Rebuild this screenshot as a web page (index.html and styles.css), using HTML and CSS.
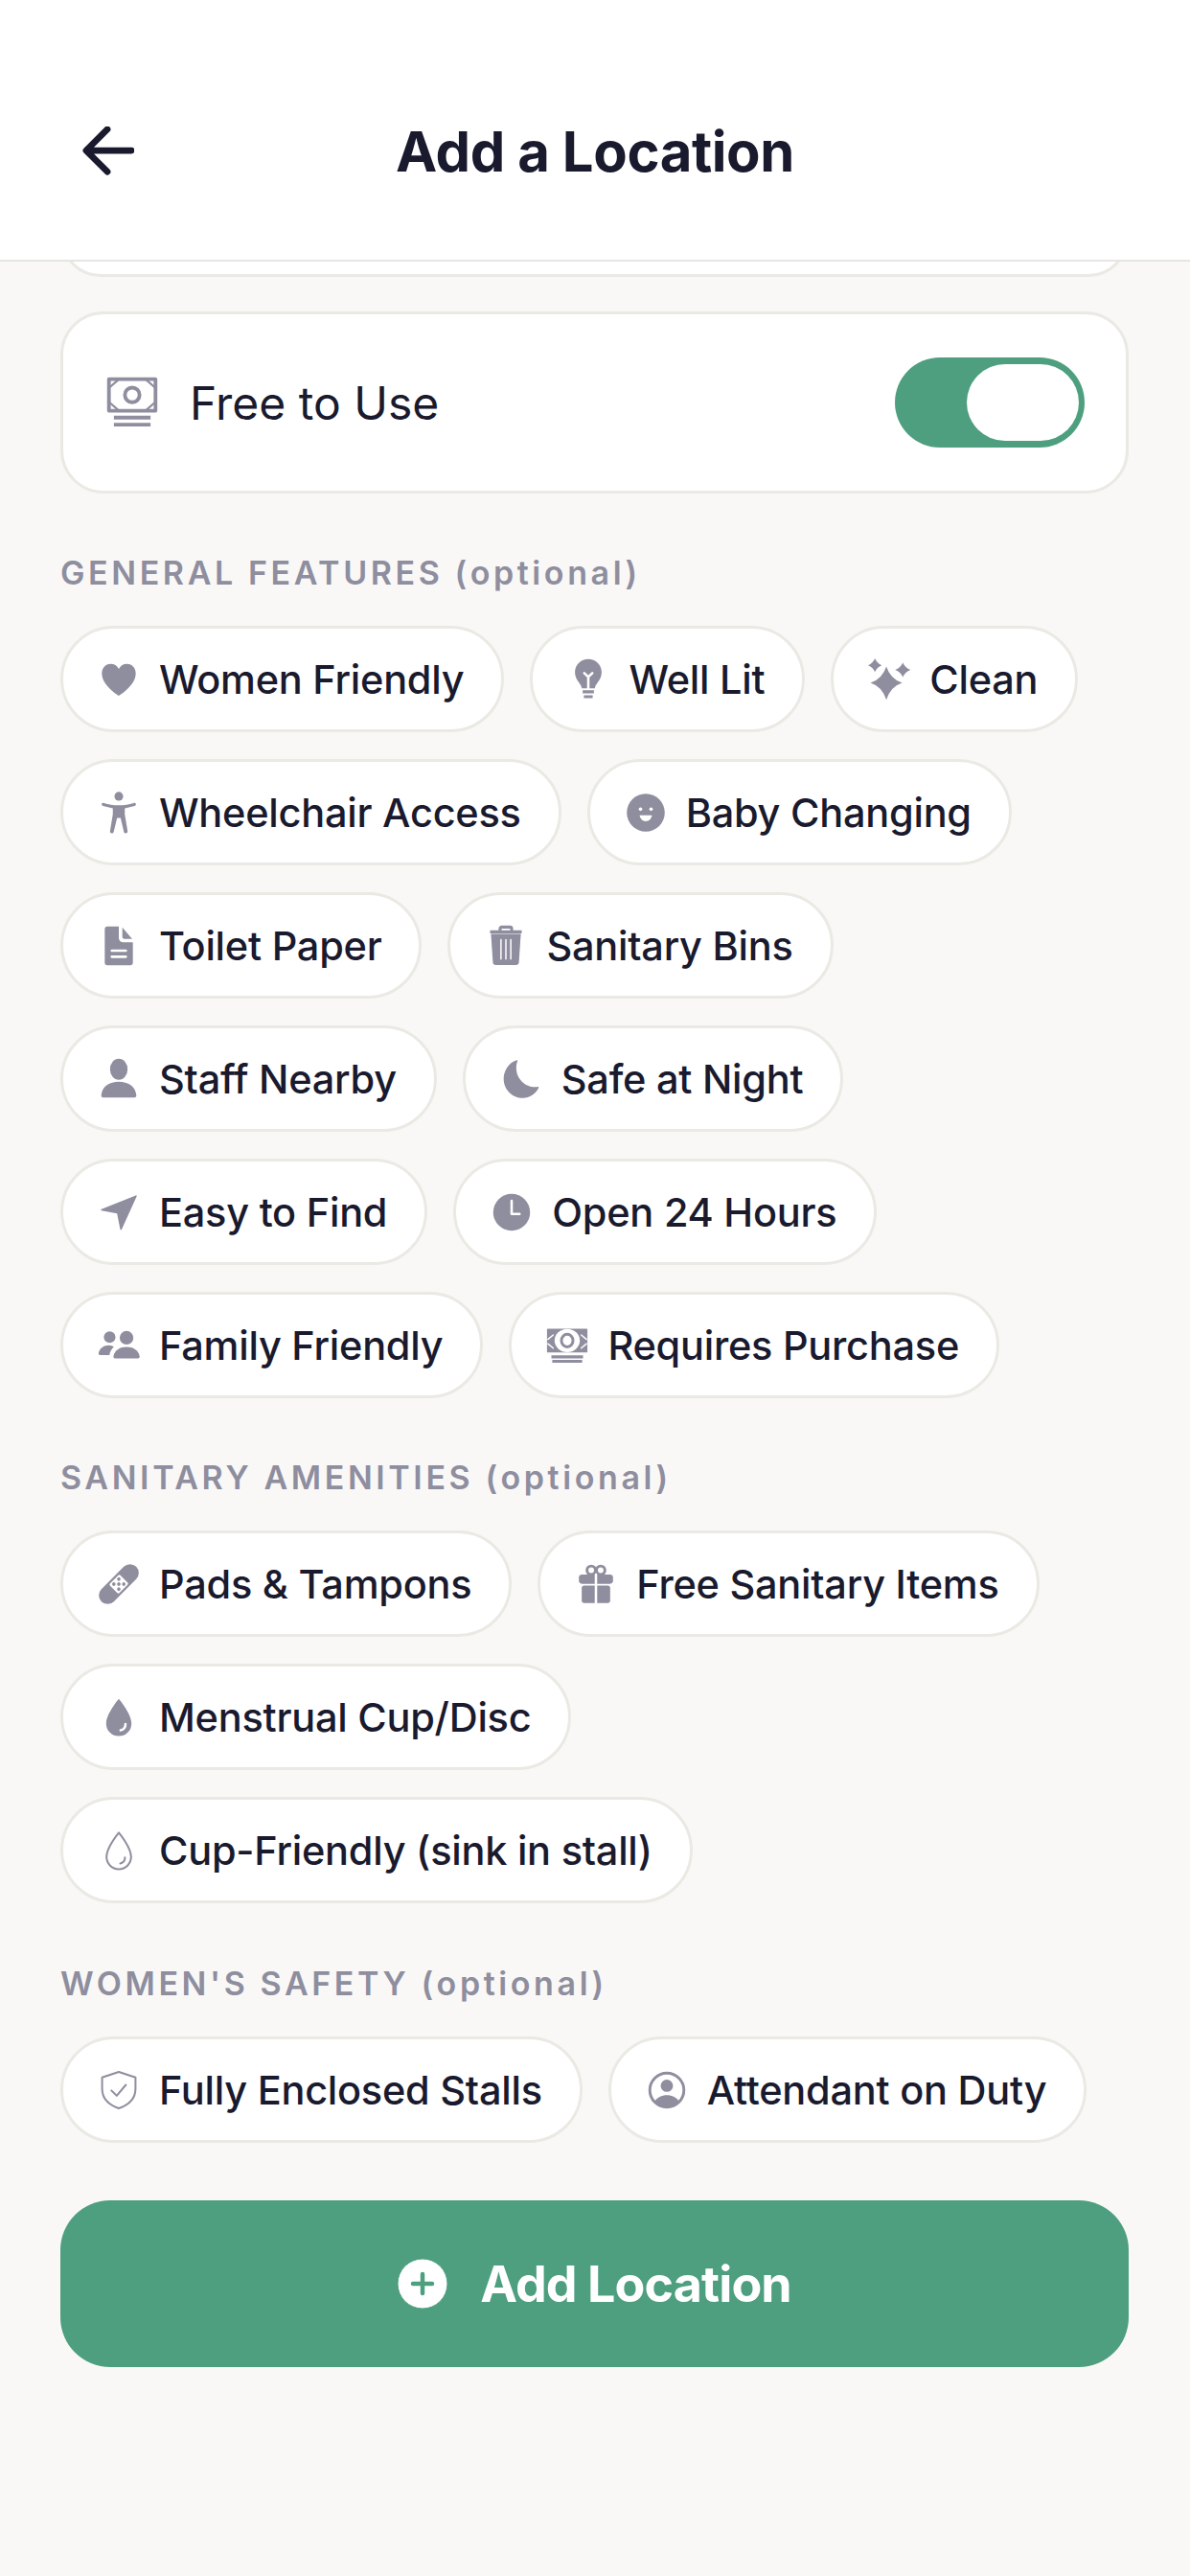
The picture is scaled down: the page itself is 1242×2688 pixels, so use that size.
FILE: index.html
```html
<!DOCTYPE html>
<html lang="en">
<head>
  <meta charset="UTF-8">
  <title>Add a Location</title>
  <link rel="stylesheet" href="styles.css">
</head>
<body>
  <header class="topbar">
    <svg class="back" viewBox="0 0 54 54"><path d="M26 3 3 26l23 23M5 26h47"/></svg>
    <h1 class="title">Add a Location</h1>
  </header>

  <main class="content">
    <div class="card card-cut"></div>

    <div class="card toggle-row">
      <svg class="icon-cash" viewBox="0 0 24 24">
        <rect x="1.2" y="1.2" width="21.6" height="14.6" class="line-thick"/>
        <circle cx="12" cy="8.5" r="3.4" class="line-thick"/>
        <path d="M1.5 5 5.5 1.5M18.5 1.5 22.5 5M1.5 12 5.5 15.5M18.5 15.5 22.5 12" class="line-thin"/>
        <path d="M3.5 19h17M3.5 22.3h17" class="line-thick"/>
      </svg>
      <span class="toggle-label">Free to Use</span>
      <div class="switch"><div class="thumb"></div></div>
    </div>

    <h2 class="section-label">GENERAL FEATURES (optional)</h2>
    <div class="chips">
      <div class="chip">
        <svg class="icon" viewBox="0 0 24 24"><path d="M12 21.2c-.4 0-9-5.600-9.600-11.800C2 5.800 4.400 3.200 7.400 3.200c2 0 3.600 1 4.600 2.800 1-1.800 2.600-2.800 4.600-2.800 3 0 5.400 2.600 5 6.200-.6 6.200-9.200 11.800-9.600 11.800z"/></svg>
        Women Friendly
      </div>
      <div class="chip">
        <svg class="icon" viewBox="0 0 24 24"><path d="M12 .4C7.800.4 4.400 3.700 4.400 7.900c0 2.600 1.200 4.400 2.400 6 .8 1 1.300 2 1.500 3.100h7.400c.2-1.100.7-2.100 1.500-3.100 1.200-1.600 2.400-3.400 2.400-6C19.600 3.700 16.200.4 12 .4z"/><path d="M9.700 8.400 12 10.600l2.300-2.200M12 10.600V17" class="cut"/><path d="M8.800 19h6.400M9.500 21.800h5" class="line-thick"/></svg>
        Well Lit
      </div>
      <div class="chip">
        <svg class="icon" viewBox="0 0 24 24"><path d="M10.400 4.600Q12.700 11.700 19.400 13.900 12.700 16.100 10.400 23.600 8.100 16.100 1.400 13.900 8.100 11.700 10.400 4.600zM3.900 0Q5 2.800 7.800 3.900 5 5 3.900 7.800 2.800 5 0 3.900 2.800 2.800 3.900 0zM19.800 2.400Q21 5.200 24.200 6.500 21 7.800 19.800 10.600 18.600 7.800 15.400 6.500 18.600 5.200 19.800 2.400z"/></svg>
        Clean
      </div>
      <div class="chip">
        <svg class="icon" viewBox="0 0 24 24"><circle cx="12" cy="2.700" r="2.500"/><path d="M2.600 6.600C2 7 2.200 8 3 8.200l5.600 1.400V13L7 22.500c-.2 1.400 1.800 1.700 2.100.4L11 15h2l1.900 7.900c.3 1.300 2.300 1 2.100-.4L15.400 13V9.600L21 8.200c.8-.2 1-1.200.4-1.600-.3-.2-.6-.2-.9-.1C18 7.200 15 7.800 12 7.800S6 7.200 3.500 6.500c-.3-.1-.6-.1-.9.1z"/></svg>
        Wheelchair Access
      </div>
      <div class="chip">
        <svg class="icon" viewBox="0 0 24 24"><circle cx="12" cy="12" r="10.800"/><circle cx="9" cy="10" r="1" class="dot"/><circle cx="15" cy="10" r="1" class="dot"/><path d="M8.500 13.500h7c-.3 2-1.700 3.400-3.500 3.400s-3.200-1.400-3.500-3.400z" class="dot"/></svg>
        Baby Changing
      </div>
      <div class="chip">
        <svg class="icon" viewBox="0 0 24 24"><path d="M5.500 1H12v6.500c0 1.400 1.100 2.500 2.500 2.500H20v11.500a1.500 1.500 0 0 1-1.500 1.500h-13A1.500 1.500 0 0 1 4 21.500v-19A1.500 1.500 0 0 1 5.500 1z"/><path d="M14 1.500 19.600 8H15a1 1 0 0 1-1-1z"/><path d="M8 14.700h8M8 18.200h8" class="cut"/></svg>
        Toilet Paper
      </div>
      <div class="chip">
        <svg class="icon" viewBox="0 0 24 24"><path d="M3.500 5.200l1.100 16.200c.1.900.7 1.500 1.600 1.500h11.600c.9 0 1.500-.6 1.600-1.500l1.100-16.200z"/><path d="M3 4h18M8.700 3.800V2.300c0-.6.400-1 1-1h4.600c.6 0 1 .4 1 1v1.500" class="line-thick"/><path d="M9.200 8.500v11M12 8.500v11M14.800 8.500v11" class="cut-thin"/></svg>
        Sanitary Bins
      </div>
      <div class="chip">
        <svg class="icon" viewBox="0 0 24 24"><ellipse cx="12" cy="6.400" rx="5" ry="6"/><path d="M12 13.500c-5.200 0-9.600 2.600-10 7.800 0 .7.400 1.200 1 1.200h18c.6 0 1-.5 1-1.200-.4-5.200-4.800-7.800-10-7.800z"/></svg>
        Staff Nearby
      </div>
      <div class="chip">
        <svg class="icon" viewBox="0 0 24 24"><path d="M9.400 1.200c.3-.1.600.2.500.5-.5 1.300-.7 2.600-.7 4 0 6 4.800 10.800 10.800 10.800.5 0 1 0 1.500-.1.400 0 .6.400.4.700C20.200 20.500 16.800 22.800 13 22.800 6.900 22.800 2 17.900 2 11.800c0-4.600 3-9.300 7.400-10.600z"/></svg>
        Safe at Night
      </div>
      <div class="chip">
        <svg class="icon" viewBox="0 0 24 24"><path d="M21.600 2.400c.4-.2.700.1.600.5l-8.600 18.900c-.2.400-.7.300-.8-.1L11 12.700 2.200 11c-.4-.1-.5-.6-.1-.8z"/></svg>
        Easy to Find
      </div>
      <div class="chip">
        <svg class="icon" viewBox="0 0 24 24"><circle cx="12" cy="12" r="10.500"/><path d="M12 5.500v7.500h4.500" class="cut"/></svg>
        Open 24 Hours
      </div>
      <div class="chip">
        <svg class="icon" viewBox="0 0 24 24"><circle cx="6.800" cy="7.200" r="3.300"/><circle cx="16.400" cy="7.600" r="3.900"/><path d="M16.400 12.800c-3.600 0-6.800 1.800-7.400 5.200-.1.700 0 1.400 1 1.400h12.800c1 0 1.100-.7 1-1.400-.6-3.400-3.800-5.200-7.400-5.200z"/><path d="M6.400 11.800c-3 .1-5.300 1.600-5.900 4.400-.1.600.1 1.200.8 1.200h5.400c.2-1.800 1.100-3.400 2.500-4.600-.8-.6-1.800-1-2.800-1z"/></svg>
        Family Friendly
      </div>
      <div class="chip">
        <svg class="icon" viewBox="0 0 24 24"><rect x="0.500" y="2.500" width="23" height="13.500" rx="0.500"/><ellipse cx="12" cy="9.200" rx="7.200" ry="6.600" class="dot"/><ellipse cx="12" cy="9.200" rx="3.300" ry="3.600" class="ring"/><path d="M1 8.500 4 6M23 8.500 20 6M1 11l3 2.500M23 11l-3 2.500" class="cut-thin"/><path d="M3 18.500h18M3.500 21h17" class="line-thick"/></svg>
        Requires Purchase
      </div>
    </div>

    <h2 class="section-label">SANITARY AMENITIES (optional)</h2>
    <div class="chips">
      <div class="chip">
        <svg class="icon" viewBox="0 0 24 24"><g transform="rotate(-45 12 12)"><rect x="-2" y="7" width="28" height="10" rx="5"/><rect x="7.800" y="8.200" width="8.400" height="7.600" rx="1" class="dot"/><circle cx="10" cy="10" r="1"/><circle cx="14" cy="10" r="1"/><circle cx="10" cy="14" r="1"/><circle cx="14" cy="14" r="1"/><circle cx="12" cy="12" r="1"/></g></svg>
        Pads &amp; Tampons
      </div>
      <div class="chip">
        <svg class="icon" viewBox="0 0 24 24"><circle cx="9.300" cy="4.100" r="2.400" class="ring"/><circle cx="14.700" cy="4.100" r="2.400" class="ring"/><rect x="2.300" y="6.500" width="19.400" height="5.300" rx="1.800"/><rect x="3.900" y="12.800" width="16.200" height="10" rx="1.500"/><path d="M12 6.500v16.500" class="cut"/></svg>
        Free Sanitary Items
      </div>
      <div class="chip">
        <svg class="icon" viewBox="0 0 24 24"><path d="M12 1.500s-7.200 8.400-7.200 14a7.200 7.200 0 0 0 14.400 0c0-5.600-7.200-14-7.200-14z"/><path d="M15.800 15.800c0 1.800-1.200 3.200-2.800 3.600" class="cut"/></svg>
        Menstrual Cup/Disc
      </div>
      <div class="chip">
        <svg class="icon" viewBox="0 0 24 24"><path d="M12 1.800s-7 8.300-7 13.800a7 7 0 0 0 14 0c0-5.500-7-13.800-7-13.800z" class="ring-thin"/><path d="M15.500 16c0 1.700-1.100 3-2.700 3.400" class="ring-thin"/></svg>
        Cup-Friendly (sink in stall)
      </div>
    </div>

    <h2 class="section-label last">WOMEN'S SAFETY (optional)</h2>
    <div class="chips">
      <div class="chip">
        <svg class="icon" viewBox="0 0 24 24"><path d="M12 1.600 2.500 4.800v6.400c0 5.400 3.800 9.200 9.500 11.200 5.700-2 9.500-5.800 9.500-11.200V4.800z" class="ring-thin"/><path d="M7.800 12.200l3 3 5.200-6.200" class="ring-thin"/></svg>
        Fully Enclosed Stalls
      </div>
      <div class="chip">
        <svg class="icon" viewBox="0 0 24 24"><circle cx="12" cy="12" r="9.700" class="ring"/><circle cx="12" cy="9.500" r="3.500"/><path d="M5 18.500c1.400-2.400 4-3.700 7-3.700s5.600 1.300 7 3.700c-1.700 2-4.200 3.200-7 3.200s-5.300-1.200-7-3.200z"/></svg>
        Attendant on Duty
      </div>
    </div>

    <button class="submit">
      <svg class="plus" viewBox="0 0 52 52"><circle cx="26" cy="26" r="26"/><path d="M26 16v20M16 26h20"/></svg>
      Add Location
    </button>
  </main>
</body>
</html>
```

FILE: styles.css
```css
:root {
  --green: #4d9f7f;
  --bg: #f9f8f6;
  --line: #ebe9e4;
  --text: #1a1a2e;
  --muted: #8e8e9f;
}

* {
  box-sizing: border-box;
}

body {
  margin: 0;
  height: 2688px;
  overflow: hidden;
  background-color: var(--bg);
  color: var(--text);
  font-family: 'Inter', sans-serif;
}

.topbar {
  display: grid;
  grid-template-columns: 1fr auto 1fr;
  align-items: center;
  height: 273px;
  padding: 100px 0 55px 86px;
  background-color: #fff;
  border-bottom: 2px solid #e6e5e1;
  position: relative;
  z-index: 1;
}

.back {
  width: 54px;
  height: 52px;
  fill: none;
  stroke: var(--text);
  stroke-width: 7;
  stroke-linecap: round;
  stroke-linejoin: round;
}

.title {
  margin: 0 86px 0 0;
  font-size: 58px;
  font-weight: 700;
  letter-spacing: -0.4px;
}

.content {
  padding: 0 64px 0 63px;
}

.card {
  background-color: #fff;
  border: 3px solid var(--line);
  border-radius: 45px;
}

.card-cut {
  height: 84px;
  margin-top: -68px;
}

.toggle-row {
  display: flex;
  align-items: center;
  height: 190px;
  margin-top: 36px;
  padding: 0 43px 0 45px;
}

.icon-cash {
  width: 54px;
  height: 54px;
  fill: none;
  stroke: var(--muted);
}

.toggle-label {
  margin-left: 33px;
  font-size: 48px;
  flex: 1;
}

.switch {
  display: flex;
  justify-content: flex-end;
  align-items: center;
  width: 198px;
  height: 94px;
  padding: 0 6px;
  background-color: var(--green);
  border-radius: 47px;
}

.thumb {
  width: 117px;
  height: 80px;
  background-color: #fff;
  border-radius: 40px;
}

.section-label {
  height: 44px;
  margin: 61px 0 33px;
  color: var(--muted);
  font-size: 34px;
  font-weight: 600;
  line-height: 44px;
  letter-spacing: 3.6px;
}

.section-label.last {
  margin-top: 62px;
}

.chips {
  display: flex;
  flex-wrap: wrap;
  gap: 28px 27px;
}

.chip {
  display: flex;
  align-items: center;
  gap: 20px;
  height: 111px;
  padding: 0 39px 0 36px;
  background-color: #fff;
  border: 3px solid var(--line);
  border-radius: 56px;
  font-size: 41.5px;
  font-weight: 500;
  letter-spacing: -0.25px;
}

.icon {
  width: 44px;
  height: 44px;
  flex: none;
  fill: var(--muted);
  overflow: visible;
}

.cut,
.cut-thin,
.line-thick,
.line-thin,
.ring,
.ring-thin {
  fill: none;
  stroke-linecap: round;
  stroke-linejoin: round;
}

.cut {
  stroke: #fff;
  stroke-width: 1.4;
}

.cut-thin {
  stroke: #fff;
  stroke-width: 0.8;
}

.dot {
  fill: #fff;
}

.line-thick {
  stroke: var(--muted);
  stroke-width: 1.7;
  stroke-linecap: butt;
}

.line-thin {
  stroke: var(--muted);
  stroke-width: 1;
}

.ring {
  stroke: var(--muted);
  stroke-width: 1.6;
}

.ring-thin {
  stroke: var(--muted);
  stroke-width: 1.1;
}

.submit {
  display: flex;
  justify-content: center;
  align-items: center;
  gap: 34px;
  width: 100%;
  height: 174px;
  margin-top: 60px;
  border: none;
  border-radius: 52px;
  background-color: var(--green);
  color: #fff;
  font-family: inherit;
  font-size: 52px;
  font-weight: 700;
  letter-spacing: -0.9px;
}

.plus {
  width: 52px;
  height: 52px;
  fill: #fff;
  stroke: var(--green);
}

.plus path {
  stroke-width: 4.5;
  stroke-linecap: round;
}
```
